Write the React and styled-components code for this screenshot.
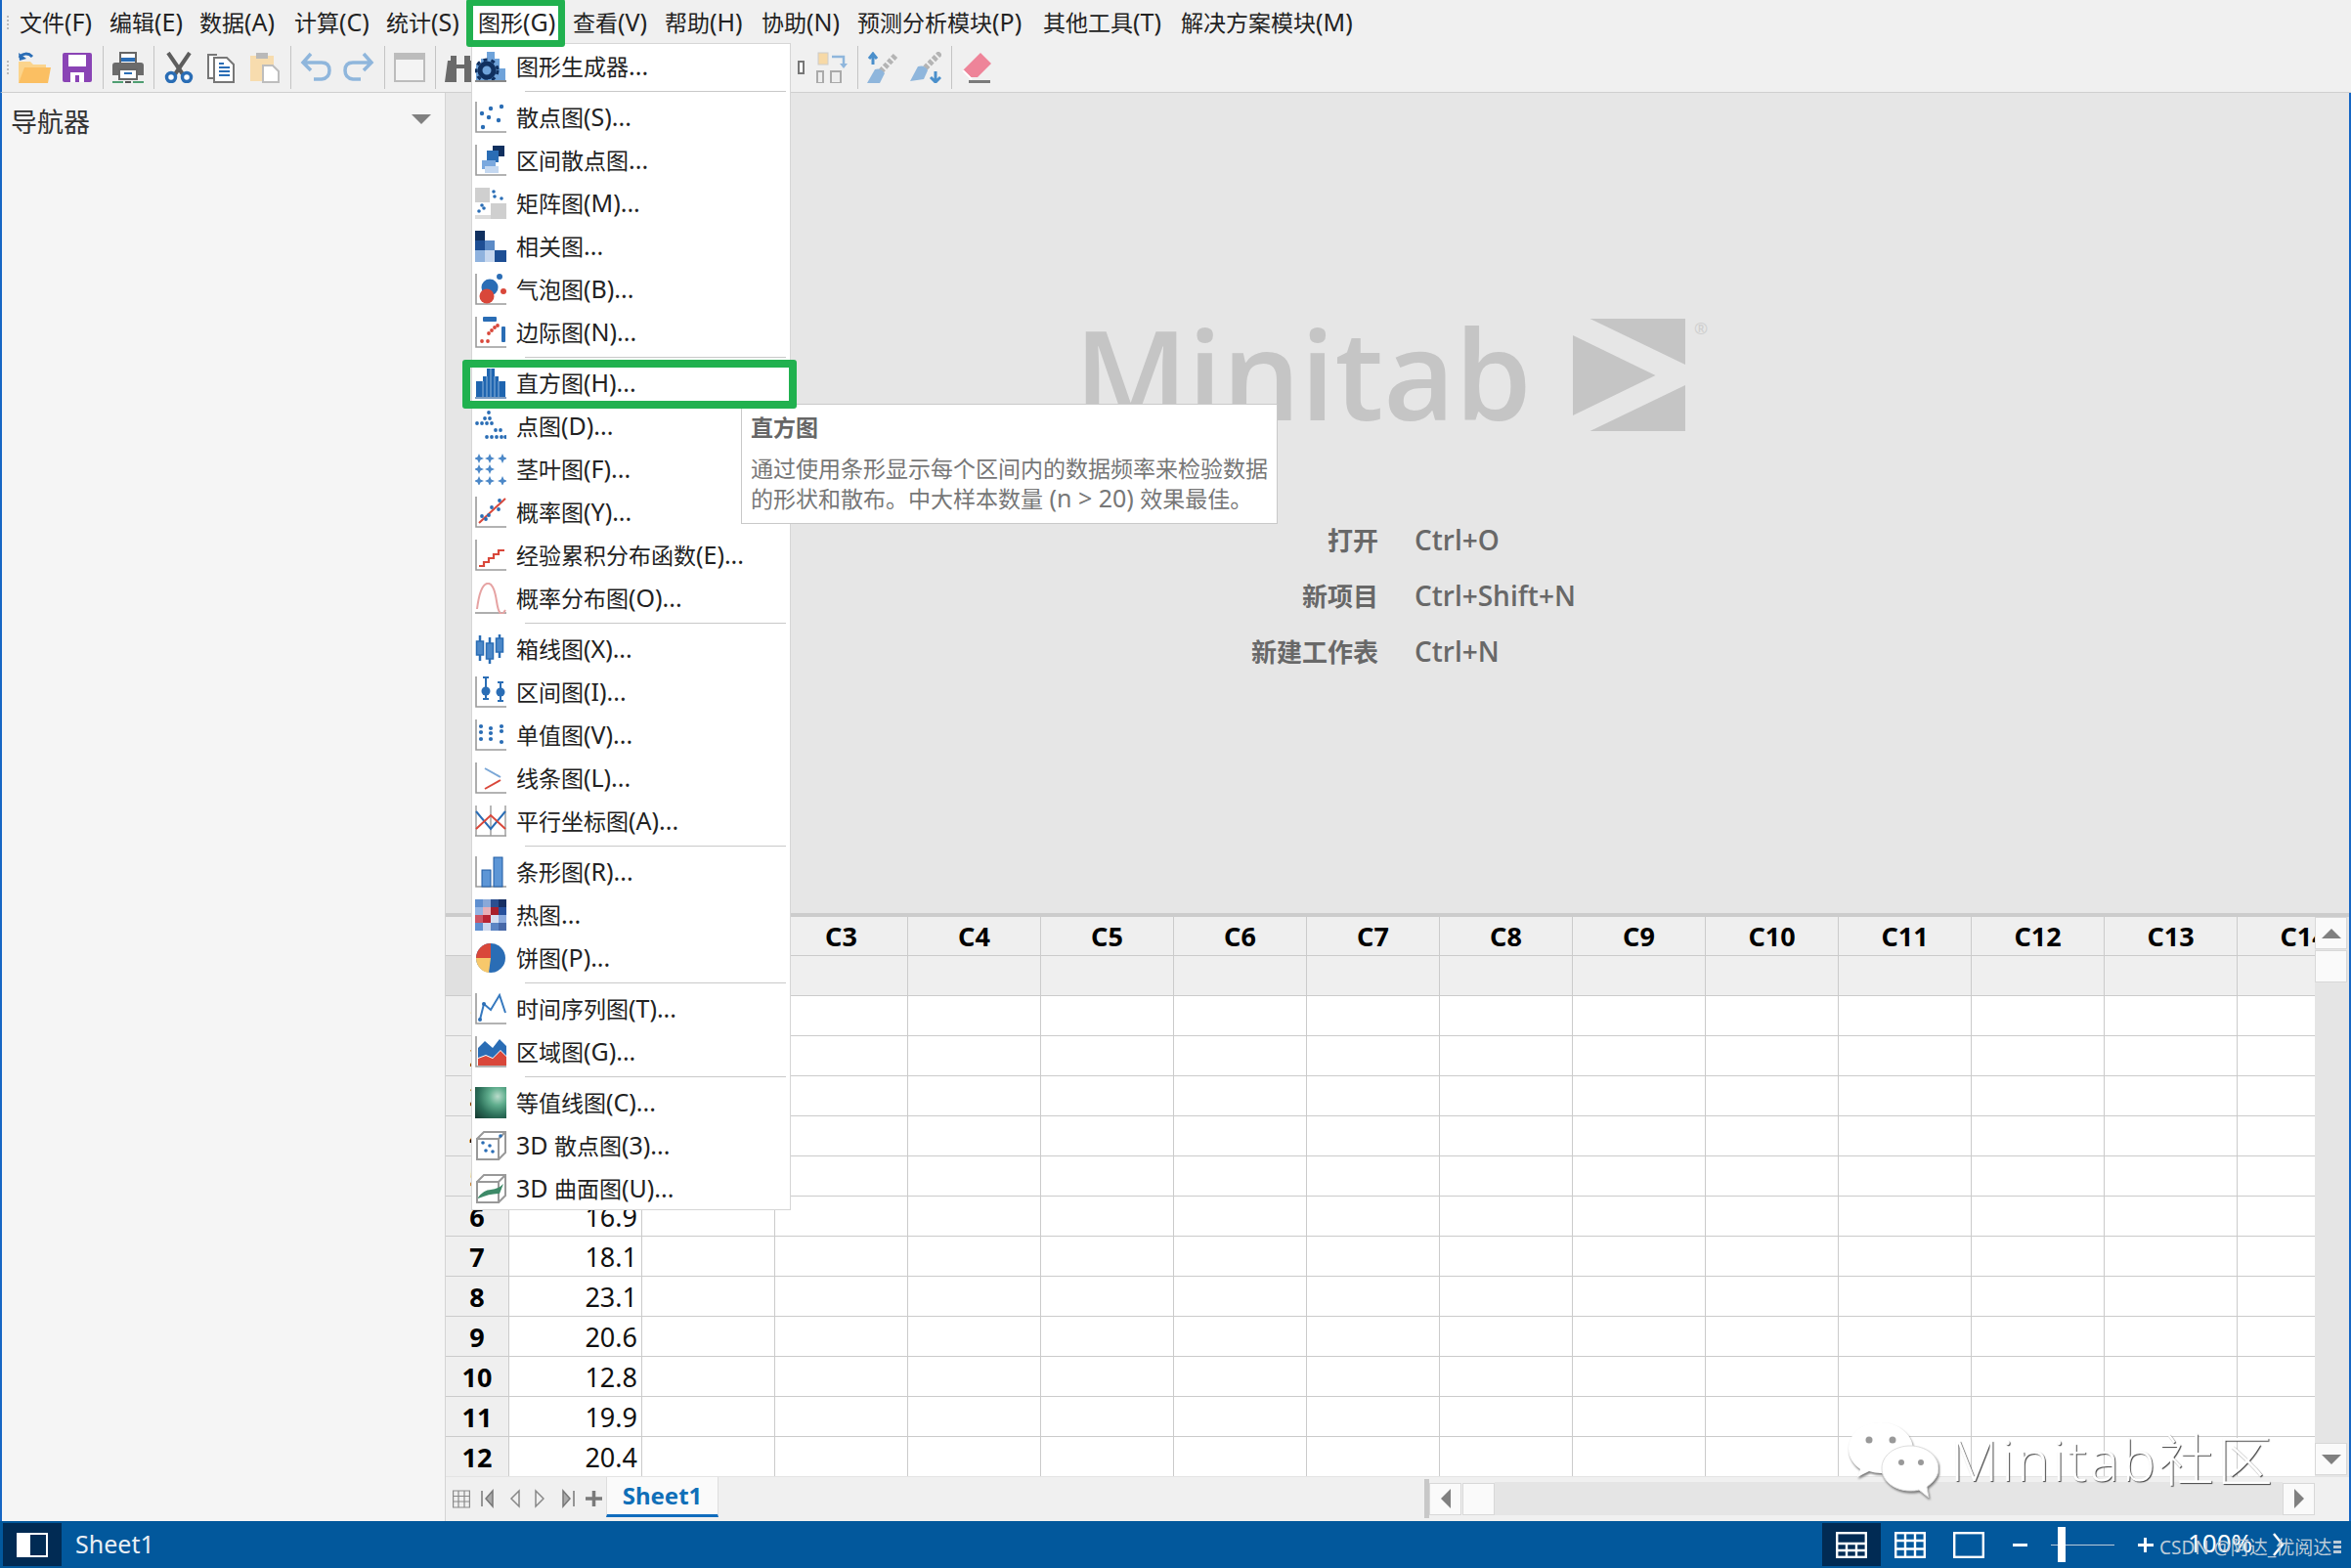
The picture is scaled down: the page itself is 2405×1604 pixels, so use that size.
import React from 'react';
import styled, { createGlobalStyle } from 'styled-components';

const GlobalStyle = createGlobalStyle`
  html, body { margin: 0; padding: 0; overflow: hidden; background: #f0f0f0; }
  *, *::before, *::after { box-sizing: border-box; }
`;

const UI_FONT = `"Noto Sans", "Noto Sans CJK SC", sans-serif`;
const BLUE = '#2a6db5';
const RED = '#d9473a';

/* shell */
const Window = styled.div`
  position: relative;
  width: 2405px;
  height: 1604px;
  display: flex;
  flex-direction: column;
  overflow: hidden;
  background: #f0f0f0;
  font-family: ${UI_FONT};
  color: #222;
`;

const Grip = styled.div`
  position: absolute;
  left: 7px;
  top: ${(p) => p.$top}px;
  width: 2px;
  height: 16px;
  background: repeating-linear-gradient(#bbb 0 2px, transparent 2px 4px);
`;

const MenuBar = styled.div`
  height: 44px;
  display: flex;
  align-items: center;
  padding-left: 18px;
  border-left: 2px solid #1666c4;
`;

const MenuBarItem = styled.div`
  position: relative;
  width: ${(p) => p.$w}px;
  font-size: 23px;
  line-height: 46px;
  white-space: nowrap;
  ${(p) => p.$marked && `
    z-index: 7;
    &::before {
      content: '';
      position: absolute;
      z-index: -1;
      top: 0;
      left: -12px;
      width: 101px;
      height: 49px;
      background: #fff;
      border: 7px solid #21b14f;
      border-radius: 3px;
    }
  `}
`;

const Latin = styled.span`
  font-size: 25px;
`;

const ToolBar = styled.div`
  height: 51px;
  display: flex;
  align-items: center;
  padding: 0 0 1px 11px;
  border-left: 2px solid #1666c4;
  border-bottom: 1px solid #cfcfcf;
`;

const ToolSlot = styled.div`
  flex: none;
  width: 44px;
  height: 34px;
  display: flex;
  align-items: center;
  justify-content: center;
`;

const ToolSep = styled.div`
  flex: none;
  width: 8px;
  height: 44px;
  display: flex;
  justify-content: center;
  &::after { content: ''; width: 1px; background: #c4c4c4; }
`;

const ToolGap = styled.div`
  flex: none;
  width: 292px;
`;

const Body = styled.div`
  flex: 1;
  min-height: 0;
  display: flex;
  border-left: 2px solid #1666c4;
  border-right: 2px solid #1666c4;
`;

/* navigator */
const Navigator = styled.div`
  flex: none;
  width: 454px;
  background: #f5f5f5;
  border-right: 1px solid #d4d4d4;
  padding: 12px 14px 0 9px;
  display: flex;
  justify-content: space-between;
  align-items: flex-start;
`;

const NavTitle = styled.div`
  font-size: 27px;
  line-height: 36px;
  color: #333;
`;

const NavCaret = styled.div`
  width: 0;
  height: 0;
  margin-top: 10px;
  border-left: 10px solid transparent;
  border-right: 10px solid transparent;
  border-top: 10px solid #808080;
`;

const Main = styled.div`
  flex: 1;
  min-width: 0;
  display: flex;
  flex-direction: column;
`;

/* welcome */
const Welcome = styled.div`
  flex: none;
  height: 839px;
  background: #e6e6e6;
  padding: 231px 0 0 643px;
`;

const LogoRow = styled.div`
  display: flex;
  align-items: flex-start;
  height: 197px;
`;

const LogoWord = styled.div`
  flex: none;
  width: 510px;
  font-family: "Open Sans", sans-serif;
  font-weight: 600;
  font-size: 126px;
  line-height: 126px;
  margin-top: -8px;
  color: #c5c5c5;
`;

const LogoMark = styled.svg`
  flex: none;
`;

const LogoReg = styled.div`
  font-size: 17px;
  line-height: 20px;
  margin: 0 0 0 9px;
  color: #cfcfcf;
`;

const Shortcuts = styled.div`
  display: grid;
  grid-template-columns: 311px auto;
  column-gap: 37px;
  grid-auto-rows: 57px;
  justify-content: start;
  align-items: center;
  color: #686868;
`;

const ShortcutLabel = styled.div`
  text-align: right;
  font-weight: 700;
  font-size: 26px;
`;

const ShortcutKeys = styled.div`
  font-family: "Open Sans", sans-serif;
  font-weight: 600;
  font-size: 28px;
`;

/* sheet */
const Splitter = styled.div`
  flex: none;
  height: 4px;
  background: #cccccc;
`;

const SheetArea = styled.div`
  flex: 1;
  min-height: 0;
  display: flex;
`;

const Grid = styled.div`
  flex: 1;
  min-width: 0;
  overflow: hidden;
  background: #fff;
`;

const Row = styled.div`
  display: grid;
  grid-template-columns: 65px repeat(14, 136px);
  width: 1969px;
  height: ${(p) => (p.$header ? 40 : 41)}px;
  background: ${(p) => (p.$shaded ? '#efefef' : '#fff')};
`;

const Cell = styled.div`
  border-right: 1px solid #cbcbcb;
  border-bottom: 1px solid #cbcbcb;
  display: flex;
  align-items: center;
  justify-content: flex-end;
  padding-right: 4px;
  font-size: 27px;
  color: #111;
`;

const HeadCell = styled(Cell)`
  justify-content: center;
  padding: 0;
  font-weight: 700;
  font-size: 27px;
  color: #000;
  background: ${(p) => p.$bg || '#efefef'};
`;

const VScroll = styled.div`
  flex: none;
  width: 35px;
  background: #e5e5e5;
  display: flex;
  flex-direction: column;
  padding-bottom: 1px;
`;

const ScrollBtn = styled.div`
  flex: none;
  width: 33px;
  height: 33px;
  margin: ${(p) => p.$m || 0};
  background: #fafafa;
  border: 1px solid #d8d8d8;
  display: flex;
  align-items: center;
  justify-content: center;
`;

const Arrow = styled.div`
  width: 0;
  height: 0;
  ${(p) => p.$dir === 'up' && 'border-left: 10px solid transparent; border-right: 10px solid transparent; border-bottom: 10px solid #808080;'}
  ${(p) => p.$dir === 'down' && 'border-left: 10px solid transparent; border-right: 10px solid transparent; border-top: 10px solid #808080;'}
  ${(p) => p.$dir === 'left' && 'border-top: 10px solid transparent; border-bottom: 10px solid transparent; border-right: 10px solid #808080;'}
  ${(p) => p.$dir === 'right' && 'border-top: 10px solid transparent; border-bottom: 10px solid transparent; border-left: 10px solid #808080;'}
`;

const VSpacer = styled.div`
  flex: 1;
`;

const TabBar = styled.div`
  flex: none;
  height: 46px;
  display: flex;
  align-items: flex-start;
  background: #f0f0f0;
  border-top: 1px solid #e4e4e4;
`;

const TabNav = styled.svg`
  flex: none;
  margin: 12px 0 0 ${(p) => p.$ml}px;
`;

const Tab = styled.div`
  flex: none;
  width: 115px;
  height: 41px;
  margin-left: 4px;
  background: #fafafa;
  border-left: 1px solid #dedede;
  border-right: 1px solid #dedede;
  border-bottom: 3px solid #0f6cbd;
  text-align: center;
  font-size: 24px;
  line-height: 38px;
  font-weight: 700;
  color: #0f6fb8;
`;

const HScroll = styled.div`
  flex: none;
  width: 911px;
  margin: 0 35px 0 auto;
  display: flex;
  align-items: center;
  height: 44px;
`;

const HGrip = styled.div`
  flex: none;
  width: 5px;
  height: 40px;
  background: #c8c8c8;
`;

const HTrack = styled.div`
  flex: 1;
  height: 34px;
  background: #e5e5e5;
`;

/* status bar */
const StatusBar = styled.div`
  flex: none;
  height: 48px;
  background: #02589c;
  display: flex;
  align-items: center;
  padding-right: 68px;
  color: #fff;
`;

const PaneBtn = styled.div`
  flex: none;
  width: 60px;
  height: 44px;
  margin-left: 3px;
  background: #012b54;
  display: flex;
  align-items: center;
  justify-content: center;
`;

const SheetName = styled.div`
  margin: -2px 0 0 14px;
  font-size: 25px;
  color: #e8eef4;
`;

const ViewBtn = styled.div`
  flex: none;
  width: 60px;
  height: 44px;
  margin-left: ${(p) => (p.$first ? 'auto' : 0)};
  background: ${(p) => (p.$active ? '#012b54' : 'transparent')};
  display: flex;
  align-items: center;
  justify-content: center;
`;

const ZoomMinus = styled.div`
  width: 15px;
  height: 3px;
  margin-left: 15px;
  background: #fff;
`;

const ZoomSlider = styled.div`
  position: relative;
  width: 65px;
  height: 1px;
  margin-left: 24px;
  background: #b9c9d8;
  &::after {
    content: '';
    position: absolute;
    left: 7px;
    top: -18px;
    width: 8px;
    height: 36px;
    background: #fff;
  }
`;

const ZoomPlus = styled.div`
  position: relative;
  width: 16px;
  height: 3px;
  margin-left: 24px;
  background: #fff;
  &::after {
    content: '';
    position: absolute;
    left: 6px;
    top: -6px;
    width: 3px;
    height: 15px;
    background: #fff;
  }
`;

const ZoomValue = styled.div`
  width: 56px;
  margin: -4px 0 0 35px;
  font-size: 26px;
  white-space: nowrap;
`;

const Chevron = styled.svg`
  flex: none;
  margin-left: 31px;
`;

/* dropdown */
const Dropdown = styled.div`
  position: absolute;
  left: 482px;
  top: 44px;
  width: 327px;
  height: 1194px;
  padding-top: 1px;
  background: #fff;
  border: 1px solid #d6d6d6;
`;

const DropRow = styled.div`
  position: relative;
  height: 44px;
  display: flex;
  align-items: center;
  padding-left: 3px;
  font-size: 23px;
  white-space: nowrap;
  color: #222;
  ${(p) => p.$marked && `
    &::after {
      content: '';
      position: absolute;
      z-index: 6;
      left: -10px;
      top: -2px;
      width: 342px;
      height: 50px;
      border: 8px solid #21b14f;
      border-radius: 3px;
    }
  `}
`;

const DropIcon = styled.svg`
  flex: none;
  margin-right: 10px;
`;

const DropLabel = styled.div`
  padding-bottom: 3px;
`;

const DropSep = styled.div`
  height: 8px;
  margin: 0 4px 0 54px;
  padding-top: 3px;
  &::after { content: ''; display: block; height: 1px; background: #c9c9c9; }
`;

const Tooltip = styled.div`
  position: absolute;
  z-index: 5;
  left: 758px;
  top: 413px;
  width: 549px;
  height: 123px;
  padding: 7px 9px;
  background: #fff;
  border: 1px solid #c9c9c9;
  color: #777;
  font-size: 23px;
`;

const TipTitle = styled.div`
  font-weight: 700;
  line-height: 32px;
  color: #666;
  margin-bottom: 11px;
`;

const TipText = styled.div`
  line-height: 30px;
  height: 30px;
  white-space: nowrap;
`;

/* watermarks */
const CommunityMark = styled.div`
  position: absolute;
  z-index: 8;
  left: 1891px;
  top: 1455px;
  display: flex;
  align-items: flex-start;
`;

const Bubbles = styled.svg`
  flex: none;
  filter: drop-shadow(1px 2px 1px #777);
`;

const CommunityText = styled.div`
  margin: 0 0 0 12px;
  font-family: "Open Sans", "Noto Sans CJK SC", sans-serif;
  font-weight: 300;
  font-size: 57px;
  line-height: 76px;
  letter-spacing: 3px;
  color: #fff;
  text-shadow: 1px 1px 1px #444;
  white-space: nowrap;
`;

const CsdnMark = styled.div`
  position: absolute;
  z-index: 8;
  left: 2209px;
  top: 1568px;
  font-size: 19px;
  line-height: 30px;
  color: #bccbd8;
  white-space: nowrap;
  &::after {
    content: '';
    position: absolute;
    left: 178px;
    top: 8px;
    width: 8px;
    height: 15px;
    background: repeating-linear-gradient(#bccbd8 0 3px, transparent 3px 5px);
  }
`;

/* toolbar drawings */
const Svg32 = ({ children, w = 32, h = 32 }) => (
  <svg width={w} height={h} viewBox={`0 0 ${w} ${h}`}>{children}</svg>
);

const toolIcons = {
  open: (
    <Svg32 w={34}>
      <path d="M1 10h12l3 3h13v6H7L1 32z" fill="#fbd48c" />
      <path d="M1 32 7 16h27l-3 16z" fill="#fbbf62" />
      <path d="M2 6c3-5 9-5 13-1" fill="none" stroke="#2a6db5" strokeWidth="3" />
      <path d="M1 1l1 8 7-2z" fill="#2a6db5" />
    </Svg32>
  ),
  save: (
    <Svg32>
      <rect x="1" y="1" width="30" height="30" rx="2" fill="#8a44b5" />
      <rect x="7" y="3" width="18" height="12" fill="#fff" />
      <rect x="9" y="21" width="14" height="10" fill="#fff" />
      <rect x="14" y="24" width="4" height="7" fill="#8a44b5" />
    </Svg32>
  ),
  print: (
    <Svg32 w={34}>
      <rect x="9" y="1" width="16" height="11" fill="#fff" stroke="#666" strokeWidth="2" />
      <rect x="10" y="6" width="14" height="4" fill={BLUE} />
      <path d="M1 14q0-3 3-3h26q3 0 3 3v10H1z" fill="#6b6b6b" />
      <rect x="8" y="18" width="18" height="10" fill="#fff" stroke="#666" strokeWidth="2" />
      <rect x="13" y="21" width="8" height="2" fill={BLUE} />
      <rect x="1" y="30" width="11" height="2" fill="#4f9e72" />
      <rect x="22" y="30" width="11" height="2" fill="#4f9e72" />
      <rect x="14" y="30" width="6" height="2" fill="#555" />
    </Svg32>
  ),
  cut: (
    <Svg32>
      <path d="M5 1 20 23M27 1 12 23" stroke="#5d5d5d" strokeWidth="4" fill="none" />
      <circle cx="8" cy="26" r="4.5" fill="#fff" stroke={BLUE} strokeWidth="3.5" />
      <circle cx="24" cy="26" r="4.5" fill="#fff" stroke={BLUE} strokeWidth="3.5" />
    </Svg32>
  ),
  copy: (
    <Svg32>
      <path d="M11 3H2v24h8" fill="#fff" stroke="#777" strokeWidth="2" />
      <path d="M8 6h13l7 7v18H8z" fill="#fff" stroke="#777" strokeWidth="2" />
      <path d="M13 16h11M13 20h11M13 24h11M13 12h5" stroke={BLUE} strokeWidth="2" />
    </Svg32>
  ),
  paste: (
    <Svg32>
      <rect x="1" y="4" width="24" height="26" fill="#f7dcae" />
      <rect x="7" y="1" width="12" height="6" fill="#b9b9b9" />
      <path d="M14 14h10l6 6v11H14z" fill="#fff" stroke="#bdbdbd" strokeWidth="2" />
    </Svg32>
  ),
  undo: (
    <Svg32>
      <path d="M3 11h19q8 0 8 8t-8 9h-8M11 2 3 11l8 8" fill="none" stroke="#8fb6dc" strokeWidth="3.5" />
    </Svg32>
  ),
  redo: (
    <Svg32>
      <path d="M29 11H10q-8 0-8 8t8 9h8M21 2l8 9-8 8" fill="none" stroke="#8fb6dc" strokeWidth="3.5" />
    </Svg32>
  ),
  window: (
    <Svg32>
      <rect x="1" y="2" width="30" height="28" fill="#f4f4f4" stroke="#bcbcbc" strokeWidth="2" />
      <rect x="1" y="2" width="30" height="6" fill="#bcbcbc" />
    </Svg32>
  ),
  binoculars: (
    <Svg32 h={30}>
      <path d="M3 8h9v4h8V8h9l3 22H20V16h-8v14H0z" fill="#6a6a6a" />
      <rect x="6" y="3" width="6" height="5" fill="#6a6a6a" />
      <rect x="20" y="3" width="6" height="5" fill="#6a6a6a" />
    </Svg32>
  ),
  sliver: (
    <Svg32 h={14}>
      <rect x="26" y="1" width="5" height="12" fill="#fff" stroke="#777" strokeWidth="2" />
    </Svg32>
  ),
  columns: (
    <Svg32>
      <rect x="2" y="1" width="10" height="12" fill="#f7d9a6" stroke="#ccc" />
      <path d="M16 5h12v8" fill="none" stroke="#8fb6dc" strokeWidth="2.5" />
      <path d="M24 12h8l-4 5z" fill="#8fb6dc" />
      <rect x="1" y="20" width="6" height="12" fill="#eee" stroke="#aaa" strokeWidth="2" />
      <rect x="15" y="20" width="10" height="12" fill="#eee" stroke="#aaa" strokeWidth="2" />
    </Svg32>
  ),
  brushUp: (
    <Svg32>
      <path d="M29 4 14 20" stroke="#b4b4b4" strokeWidth="6" strokeDasharray="4 2" />
      <path d="M0 32 8 18q6-2 10 4l-5 10z" fill="#8fb6dc" />
      <path d="M6 13V4M2 7l4-5 4 5" stroke="#4a8fcb" strokeWidth="3" fill="none" />
    </Svg32>
  ),
  brushDown: (
    <Svg32>
      <path d="M31 1 15 17" stroke="#b4b4b4" strokeWidth="6" strokeDasharray="4 2" />
      <path d="M0 30 8 15q7-2 10 4l-4 9z" fill="#8fb6dc" />
      <path d="M26 20v10M21 26l5 5 5-5" stroke="#4a8fcb" strokeWidth="3" fill="none" />
    </Svg32>
  ),
  eraser: (
    <Svg32>
      <path d="M2 19 20 1l11 11-14 14h-7z" fill="#ee8499" />
      <path d="M2 19l9 9" stroke="#fff" strokeWidth="2" />
      <rect x="8" y="29" width="22" height="3" fill="#7a7a7a" />
    </Svg32>
  ),
};

/* menu drawings, 32 x 32 */
const Axis = () => <path d="M1 0v31h31" fill="none" stroke="#9a9a9a" strokeWidth="1.6" />;
const Dot = ({ x, y, r = 2, c = BLUE }) => <circle cx={x} cy={y} r={r} fill={c} />;
const Dots = ({ list, r, c }) => list.map(([x, y], i) => <Dot key={i} x={x} y={y} r={r} c={c} />);
const Block = ({ x, y, w = 8, h = 8, c }) => <rect x={x} y={y} width={w} height={h} fill={c} />;
const Star = ({ x, y }) => <path d={`M${x} ${y - 5}l1.5 3.500 3.500 1.500-3.500 1.500-1.500 3.500-1.500-3.500-3.500-1.500 3.500-1.500z`} fill="#4c88c8" />;

const HEAT = [
  ['#5f8fd0', '#8aa8d8', '#2b4f8f', '#172f63'],
  ['#94b4e4', '#e9aeb6', '#a8202c', '#27509c'],
  ['#cc5565', '#b82534', '#d6dff0', '#8cabdf'],
  ['#5f8fd0', '#ccd8ef', '#5c85c4', '#4768a8'],
];

const chartIcons = {
  builder: (
    <>
      <path d="M12 1h8v7h5v10h6v13H1V14h5V8h6z" fill="#6fa3da" />
      <circle cx="12" cy="20" r="7" fill="none" stroke="#10305f" strokeWidth="5" />
      <circle cx="12" cy="20" r="11" fill="none" stroke="#10305f" strokeWidth="3" strokeDasharray="4 4" />
      <path d="M0 31h32" stroke="#888" strokeWidth="2" />
    </>
  ),
  scatter: <><Axis /><Dots list={[[8, 26], [14, 16], [24, 19], [16, 7], [27, 5], [7, 12]]} r={2.2} /></>,
  interval: (
    <>
      <Axis />
      <Block x={18} y={1} w={12} h={11} c="#10305f" />
      <Block x={12} y={6} w={12} h={12} c="#2a6db5" />
      <Block x={7} y={16} w={14} h={9} c="#7aa8de" />
      <Block x={10} y={22} w={14} h={7} c="#c4d8f1" />
    </>
  ),
  matrix: (
    <>
      <Block x={0} y={0} w={15} h={15} c="#cfcfcf" />
      <Block x={16} y={16} w={16} h={16} c="#cfcfcf" />
      <Block x={0} y={28} w={16} h={4} c="#dcdcdc" />
      <Dots list={[[19, 4], [27, 11], [20, 9], [7, 18], [4, 24], [9, 21]]} r={1.8} />
    </>
  ),
  corr: (
    <>
      <Block x={0} y={0} w={10} h={10} c="#10305f" />
      <Block x={0} y={10} w={10} h={10} c="#1d4e94" />
      <Block x={10} y={10} w={10} h={10} c="#5b8ac6" />
      <Block x={0} y={20} w={10} h={12} c="#8fb2de" />
      <Block x={10} y={20} w={10} h={12} c="#c6d7ef" />
      <Block x={20} y={20} w={12} h={12} c="#1d4e94" />
    </>
  ),
  bubble: (
    <>
      <Axis />
      <circle cx="15" cy="14" r="8.5" fill="#2a6db5" />
      <circle cx="12" cy="23" r="7.5" fill="#d9473a" />
      <Dot x={25} y={3} r={3} />
      <Dot x={29} y={18} r={3} c={RED} />
    </>
  ),
  marginal: (
    <>
      <Axis />
      <rect x="8" y="0" width="14" height="5" rx="1" fill={BLUE} />
      <rect x="27" y="10" width="4" height="16" rx="1" fill={BLUE} />
      <Dots list={[[20, 11], [14, 17], [17, 14], [7, 25], [13, 25], [23, 9]]} r={1.9} c={RED} />
    </>
  ),
  histogram: (
    <>
      <path d="M1 14h7V9h4V1h8v8h4v5h7v17H1z" fill="#1f65b0" />
      <path d="M8 14v17M12 9v22M16 1v30M20 9v22M24 14v17" stroke="#8fb6dc" strokeWidth="1" />
      <path d="M0 31h32" stroke="#7a9cc2" strokeWidth="2" />
    </>
  ),
  dot: (
    <Dots
      list={[[14, 2], [10, 8], [15, 8], [2, 13], [7, 13], [12, 13], [17, 13], [21, 20], [26, 20], [12, 27], [17, 27], [22, 27], [27, 27], [31, 27]]}
      r={1.9}
    />
  ),
  stem: (
    <>
      {[4, 15, 28].map((x) => <Star key={x} x={x} y={5} />)}
      {[4, 15].map((x) => <Star key={x} x={x} y={16} />)}
      {[4, 15, 28].map((x) => <Star key={x} x={x} y={28} />)}
    </>
  ),
  prob: (
    <>
      <Axis />
      <path d="M4 27 31 2" stroke={RED} strokeWidth="2" />
      <Dots list={[[7, 20], [14, 19], [17, 11], [24, 13], [25, 4], [11, 23]]} r={1.9} />
    </>
  ),
  ecdf: <><Axis /><path d="M4 27h5v-4h5v-4h5v-4h5v-4h6" fill="none" stroke={RED} strokeWidth="2.2" /></>,
  dist: (
    <>
      <path d="M0 31h32" stroke="#9a9a9a" strokeWidth="1.6" />
      <path d="M2 27Q5 3 12 1t10 18 9 9" fill="none" stroke="#e6a3a3" strokeWidth="2" />
    </>
  ),
  box: (
    <>
      {[[5, 2, 28, 8, 22], [15, 4, 31, 10, 26], [25, 1, 25, 5, 19]].map(([x, t, b, bt, bb]) => (
        <g key={x}>
          <path d={`M${x} ${t}V${b}`} stroke={BLUE} strokeWidth="2.500" />
          <rect x={x - 3.5} y={bt} width="7" height={bb - bt} fill="#4c88c8" stroke={BLUE} strokeWidth="1.500" />
        </g>
      ))}
    </>
  ),
  intervalPlot: (
    <>
      <Axis />
      <path d="M8 1h6M11 1v22M8 23h6M23 6h6M26 6v19M23 25h6" stroke={BLUE} strokeWidth="2" fill="none" />
      <Dot x={11} y={15} r={4.5} />
      <Dot x={26} y={16} r={4.5} />
    </>
  ),
  indiv: (
    <>
      <Axis />
      <Dots list={[[6, 7], [6, 13], [6, 20], [16, 9], [16, 14], [16, 20], [27, 7], [27, 12], [27, 23]]} r={2.1} />
    </>
  ),
  line: (
    <>
      <Axis />
      <path d="M10 6 26 15" stroke="#7ba7d6" strokeWidth="2" />
      <path d="M10 27 26 18" stroke={RED} strokeWidth="2" />
    </>
  ),
  parallel: (
    <>
      <path d="M1 0v31M16 0v31M31 0v31M0 31h32" stroke="#9a9a9a" strokeWidth="1.4" />
      <path d="M1 6 16 24 31 6" fill="none" stroke={BLUE} strokeWidth="2" />
      <path d="M1 24 16 10 31 24" fill="none" stroke={RED} strokeWidth="2" />
    </>
  ),
  bar: (
    <>
      <Axis />
      <rect x="7" y="14" width="9" height="17" fill="#5d96d6" stroke="#1f5ba3" />
      <rect x="19" y="1" width="9" height="30" fill="#5d96d6" stroke="#1f5ba3" />
    </>
  ),
  heat: (
    <>
      {HEAT.map((row, y) => row.map((c, x) => <Block key={`${x}${y}`} x={x * 8} y={y * 8} c={c} />))}
    </>
  ),
  pie: (
    <>
      <circle cx="16" cy="16" r="15" fill="#2a6db5" />
      <path d="M16 16V1A15 15 0 0 0 1 16h15" fill={RED} />
      <path d="M16 16H1a15 15 0 0 0 13 15z" fill="#f7c86b" />
    </>
  ),
  time: <><Axis /><path d="M5 27 9 11l7 6 9-15 6 18" fill="none" stroke="#3679bf" strokeWidth="2" /><Dots list={[[5, 27], [9, 11]]} r={2} /></>,
  area: (
    <>
      <Axis />
      <path d="M3 30V12l7-7 8 7 7-9 7 7v20z" fill="#2a6db5" />
      <path d="M3 30V22l8-3 7 3 8-8 6 6v10z" fill="#fff" />
      <path d="M3 30V23l8-3 7 3 8-8 6 6v9z" fill={RED} />
    </>
  ),
  contour: (
    <>
      <defs>
        <radialGradient id="contourFill" cx="0.72" cy="0.3" r="0.95">
          <stop offset="0" stopColor="#b9dccb" />
          <stop offset="0.3" stopColor="#5fad8d" />
          <stop offset="0.65" stopColor="#2c6f59" />
          <stop offset="1" stopColor="#173d33" />
        </radialGradient>
      </defs>
      <rect width="32" height="32" fill="url(#contourFill)" />
    </>
  ),
  scatter3d: (
    <>
      <path d="M2 9h22v21H2zM2 9l7-7h22v21l-7 7M24 9l7-7" fill="#fff" stroke="#999" strokeWidth="2" />
      <Dots list={[[15, 16], [11, 21], [18, 22], [26, 6], [8, 13]]} r={1.8} />
    </>
  ),
  surface3d: (
    <>
      <path d="M2 9h22v21H2zM2 9l7-7h22v21l-7 7M24 9l7-7" fill="#fff" stroke="#999" strokeWidth="2" />
      <path d="M3 25q6-8 13-8t13-6l-4 10q-10 0-22 5z" fill="#3d8a68" />
    </>
  ),
};

const menuGroups = [
  [['builder', '图形生成器...']],
  [
    ['scatter', '散点图(S)...'],
    ['interval', '区间散点图...'],
    ['matrix', '矩阵图(M)...'],
    ['corr', '相关图...'],
    ['bubble', '气泡图(B)...'],
    ['marginal', '边际图(N)...'],
  ],
  [
    ['histogram', '直方图(H)...'],
    ['dot', '点图(D)...'],
    ['stem', '茎叶图(F)...'],
    ['prob', '概率图(Y)...'],
    ['ecdf', '经验累积分布函数(E)...'],
    ['dist', '概率分布图(O)...'],
  ],
  [
    ['box', '箱线图(X)...'],
    ['intervalPlot', '区间图(I)...'],
    ['indiv', '单值图(V)...'],
    ['line', '线条图(L)...'],
    ['parallel', '平行坐标图(A)...'],
  ],
  [
    ['bar', '条形图(R)...'],
    ['heat', '热图...'],
    ['pie', '饼图(P)...'],
  ],
  [
    ['time', '时间序列图(T)...'],
    ['area', '区域图(G)...'],
  ],
  [
    ['contour', '等值线图(C)...'],
    ['scatter3d', '3D 散点图(3)...'],
    ['surface3d', '3D 曲面图(U)...'],
  ],
];

const menuBar = [
  ['文件(F)', 92],
  ['编辑(E)', 92],
  ['数据(A)', 97],
  ['计算(C)', 94],
  ['统计(S)', 94],
  ['图形(G)', 97],
  ['查看(V)', 94],
  ['帮助(H)', 99],
  ['协助(N)', 98],
  ['预测分析模块(P)', 190],
  ['其他工具(T)', 141],
  ['解决方案模块(M)', 190],
];

const toolbar = [
  'open', 'save', '|', 'print', '|', 'cut', 'copy', 'paste', '|', 'undo', 'redo', '|', 'window', '|',
  'binoculars', 'gap', 'sliver', 'columns', '|', 'brushUp', 'brushDown', '|', 'eraser',
];

const values = { 6: '16.9', 7: '18.1', 8: '23.1', 9: '20.6', 10: '12.8', 11: '19.9', 12: '20.4' };
const columns = Array.from({ length: 14 }, (_, i) => i + 1);
const rows = Array.from({ length: 12 }, (_, i) => i + 1);

// the Latin part of a mixed label sits a little larger than the Chinese part
const Mixed = ({ text }) =>
  text.split(/([\x20-\x7e]+)/).map((part, i) =>
    i % 2 ? <Latin key={i}>{part}</Latin> : part
  );

const ViewIcon = ({ kind }) => (
  <svg width="32" height="27" viewBox="0 0 32 27" fill="none" stroke="#fff" strokeWidth="2.4">
    <rect x="1.2" y="1.2" width="29.6" height="24.6" />
    {kind === 'worksheet' && <path d="M1 12h30M1 19h30M11 12v14M21 12v14" />}
    {kind === 'grid' && <path d="M1 9h30M1 17.500h30M11 1v25M21 1v25" />}
  </svg>
);

const App = () => (
  <Window>
    <GlobalStyle />
    <Grip $top={16} />
    <Grip $top={62} />
    <MenuBar>
      {menuBar.map(([label, w]) => (
        <MenuBarItem key={label} $w={w} $marked={label === '图形(G)'}>
          <Mixed text={label} />
        </MenuBarItem>
      ))}
    </MenuBar>
    <ToolBar>
      {toolbar.map((name, i) => {
        if (name === '|') return <ToolSep key={i} />;
        if (name === 'gap') return <ToolGap key={i} />;
        return <ToolSlot key={i}>{toolIcons[name]}</ToolSlot>;
      })}
    </ToolBar>

    <Body>
      <Navigator>
        <NavTitle>导航器</NavTitle>
        <NavCaret />
      </Navigator>
      <Main>
        <Welcome>
          <LogoRow>
            <LogoWord>Minitab</LogoWord>
            <LogoMark width="115" height="115" viewBox="0 0 115 115" fill="#c5c5c5">
              <path d="M17.500 0H115V47z" />
              <path d="M0 17 84.500 58 0 99z" />
              <path d="M17.500 115H115V68z" />
            </LogoMark>
            <LogoReg>®</LogoReg>
          </LogoRow>
          <Shortcuts>
            <ShortcutLabel>打开</ShortcutLabel>
            <ShortcutKeys>Ctrl+O</ShortcutKeys>
            <ShortcutLabel>新项目</ShortcutLabel>
            <ShortcutKeys>Ctrl+Shift+N</ShortcutKeys>
            <ShortcutLabel>新建工作表</ShortcutLabel>
            <ShortcutKeys>Ctrl+N</ShortcutKeys>
          </Shortcuts>
        </Welcome>
        <Splitter />
        <SheetArea>
          <Grid>
            <Row $header $shaded>
              <HeadCell />
              {columns.map((c) => <HeadCell key={c}>C{c}</HeadCell>)}
            </Row>
            <Row $shaded>
              <HeadCell $bg="#e0e0e0" />
              {columns.map((c) => <HeadCell key={c} />)}
            </Row>
            {rows.map((r) => (
              <Row key={r}>
                <HeadCell>{r}</HeadCell>
                <Cell>{values[r]}</Cell>
                {columns.slice(1).map((c) => <Cell key={c} />)}
              </Row>
            ))}
          </Grid>
          <VScroll>
            <ScrollBtn><Arrow $dir="up" /></ScrollBtn>
            <ScrollBtn $m="1px 0 0" />
            <VSpacer />
            <ScrollBtn><Arrow $dir="down" /></ScrollBtn>
          </VScroll>
        </SheetArea>
        <TabBar>
          <TabNav $ml={7} width="18" height="20" viewBox="0 0 18 20" fill="none" stroke="#8a8a8a" strokeWidth="1.200">
            <path d="M.6 2h16.800v17H.6zM.6 7.500h16.800M.6 13h16.800M6 2v17M12 2v17" />
          </TabNav>
          <TabNav $ml={11} width="13" height="20" viewBox="0 0 13 20" fill="none" stroke="#777" strokeWidth="1.500">
            <path d="M1 2v16" /><path d="M12 2 5 10l7 8z" fill="#aaa" />
          </TabNav>
          <TabNav $ml={16} width="11" height="20" viewBox="0 0 11 20" fill="none" stroke="#888" strokeWidth="1.500">
            <path d="M10 2 2 10l8 8z" />
          </TabNav>
          <TabNav $ml={15} width="10" height="20" viewBox="0 0 10 20" fill="none" stroke="#888" strokeWidth="1.500">
            <path d="M1 2l8 8-8 8z" />
          </TabNav>
          <TabNav $ml={18} width="13" height="20" viewBox="0 0 13 20" fill="none" stroke="#777" strokeWidth="1.500">
            <path d="M12 2v16" /><path d="M1 2l7 8-7 8z" fill="#aaa" />
          </TabNav>
          <TabNav $ml={11} width="17" height="20" viewBox="0 0 17 20" fill="none" stroke="#7a7a7a" strokeWidth="3.500">
            <path d="M0 10h17M8.500 2v16" />
          </TabNav>
          <Tab>Sheet1</Tab>
          <HScroll>
            <HGrip />
            <ScrollBtn><Arrow $dir="left" /></ScrollBtn>
            <ScrollBtn $m="0 0 0 1px" />
            <HTrack />
            <ScrollBtn><Arrow $dir="right" /></ScrollBtn>
          </HScroll>
        </TabBar>
      </Main>
    </Body>

    <StatusBar>
      <PaneBtn>
        <svg width="32" height="25" viewBox="0 0 32 25">
          <rect x="1" y="1" width="30" height="23" fill="#012b54" stroke="#fff" strokeWidth="2" />
          <rect x="0" y="0" width="14" height="25" fill="#fff" />
        </svg>
      </PaneBtn>
      <SheetName>Sheet1</SheetName>
      <ViewBtn $first $active><ViewIcon kind="worksheet" /></ViewBtn>
      <ViewBtn><ViewIcon kind="grid" /></ViewBtn>
      <ViewBtn><ViewIcon kind="plain" /></ViewBtn>
      <ZoomMinus />
      <ZoomSlider />
      <ZoomPlus />
      <ZoomValue>100%</ZoomValue>
      <Chevron width="12" height="26" viewBox="0 0 12 26" fill="none" stroke="#fff" strokeWidth="2.500">
        <path d="M1 2 10 13 1 24" />
      </Chevron>
    </StatusBar>

    <Dropdown>
      {menuGroups.map((group, g) => (
        <React.Fragment key={g}>
          {g > 0 && <DropSep />}
          {group.map(([icon, label]) => (
            <DropRow key={label} $marked={icon === 'histogram'}>
              <DropIcon width="32" height="32" viewBox="0 0 32 32">{chartIcons[icon]}</DropIcon>
              <DropLabel><Mixed text={label} /></DropLabel>
            </DropRow>
          ))}
        </React.Fragment>
      ))}
    </Dropdown>

    <Tooltip>
      <TipTitle>直方图</TipTitle>
      <TipText>通过使用条形显示每个区间内的数据频率来检验数据</TipText>
      <TipText><Mixed text="的形状和散布。中大样本数量 (n > 20) 效果最佳。" /></TipText>
    </Tooltip>

    <CommunityMark>
      <Bubbles width="92" height="78" viewBox="0 0 92 78" fill="#fff">
        <path d="M33 0C15 0 0 11 0 27c0 9 5 16 12 21l-3 8 12-6c4 1 8 2 12 2 18 0 33-11 33-25S51 0 33 0z" />
        <path d="M63 24c-16 0-29 10-29 23s13 23 29 23c3 0 6 0 9-1l10 8-2-11c7-5 12-11 12-19 0-13-13-23-29-23z" stroke="#ddd" />
        <circle cx="21" cy="18" r="3.500" fill="#999" />
        <circle cx="45" cy="18" r="3.500" fill="#999" />
        <circle cx="54" cy="41" r="3" fill="#999" />
        <circle cx="74" cy="41" r="3" fill="#999" />
      </Bubbles>
      <CommunityText>Minitab社区</CommunityText>
    </CommunityMark>
    <CsdnMark>CSDN @阿达_优阅达</CsdnMark>
  </Window>
);

export default App;
